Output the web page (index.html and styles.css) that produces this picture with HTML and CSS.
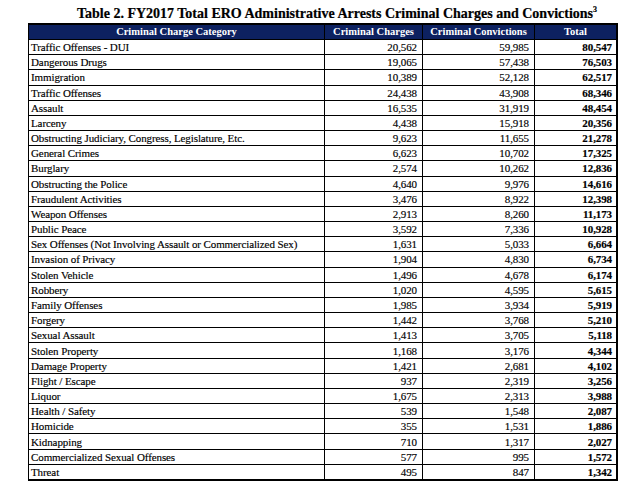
FILE: index.html
```html
<!DOCTYPE html>
<html>
<head>
<meta charset="utf-8">
<link rel="stylesheet" href="styles.css">
</head>
<body>
<div class="page">
  <h1 class="title">Table 2. FY2017 Total ERO Administrative Arrests Criminal Charges and Convictions<sup>3</sup></h1>
  <table class="data">
    <colgroup>
      <col class="c1"><col class="c2"><col class="c3"><col class="c4">
    </colgroup>
    <thead>
      <tr><th>Criminal Charge Category</th><th>Criminal Charges</th><th>Criminal Convictions</th><th>Total</th></tr>
    </thead>
    <tbody>
      <tr><td>Traffic Offenses - DUI</td><td>20,562</td><td>59,985</td><td>80,547</td></tr>
      <tr><td>Dangerous Drugs</td><td>19,065</td><td>57,438</td><td>76,503</td></tr>
      <tr><td>Immigration</td><td>10,389</td><td>52,128</td><td>62,517</td></tr>
      <tr><td>Traffic Offenses</td><td>24,438</td><td>43,908</td><td>68,346</td></tr>
      <tr><td>Assault</td><td>16,535</td><td>31,919</td><td>48,454</td></tr>
      <tr><td>Larceny</td><td>4,438</td><td>15,918</td><td>20,356</td></tr>
      <tr><td>Obstructing Judiciary, Congress, Legislature, Etc.</td><td>9,623</td><td>11,655</td><td>21,278</td></tr>
      <tr><td>General Crimes</td><td>6,623</td><td>10,702</td><td>17,325</td></tr>
      <tr><td>Burglary</td><td>2,574</td><td>10,262</td><td>12,836</td></tr>
      <tr><td>Obstructing the Police</td><td>4,640</td><td>9,976</td><td>14,616</td></tr>
      <tr><td>Fraudulent Activities</td><td>3,476</td><td>8,922</td><td>12,398</td></tr>
      <tr><td>Weapon Offenses</td><td>2,913</td><td>8,260</td><td>11,173</td></tr>
      <tr><td>Public Peace</td><td>3,592</td><td>7,336</td><td>10,928</td></tr>
      <tr><td>Sex Offenses (Not Involving Assault or Commercialized Sex)</td><td>1,631</td><td>5,033</td><td>6,664</td></tr>
      <tr><td>Invasion of Privacy</td><td>1,904</td><td>4,830</td><td>6,734</td></tr>
      <tr><td>Stolen Vehicle</td><td>1,496</td><td>4,678</td><td>6,174</td></tr>
      <tr><td>Robbery</td><td>1,020</td><td>4,595</td><td>5,615</td></tr>
      <tr><td>Family Offenses</td><td>1,985</td><td>3,934</td><td>5,919</td></tr>
      <tr><td>Forgery</td><td>1,442</td><td>3,768</td><td>5,210</td></tr>
      <tr><td>Sexual Assault</td><td>1,413</td><td>3,705</td><td>5,118</td></tr>
      <tr><td>Stolen Property</td><td>1,168</td><td>3,176</td><td>4,344</td></tr>
      <tr><td>Damage Property</td><td>1,421</td><td>2,681</td><td>4,102</td></tr>
      <tr><td>Flight / Escape</td><td>937</td><td>2,319</td><td>3,256</td></tr>
      <tr><td>Liquor</td><td>1,675</td><td>2,313</td><td>3,988</td></tr>
      <tr><td>Health / Safety</td><td>539</td><td>1,548</td><td>2,087</td></tr>
      <tr><td>Homicide</td><td>355</td><td>1,531</td><td>1,886</td></tr>
      <tr><td>Kidnapping</td><td>710</td><td>1,317</td><td>2,027</td></tr>
      <tr><td>Commercialized Sexual Offenses</td><td>577</td><td>995</td><td>1,572</td></tr>
      <tr><td>Threat</td><td>495</td><td>847</td><td>1,342</td></tr>
    </tbody>
  </table>
</div>
</body>
</html>
```
FILE: styles.css
```css
html, body {
  margin: 0;
  padding: 0;
  background: #fff;
}
.page {
  padding: 6px 0 0 28px;
  width: 590px;
  font-family: "Liberation Serif", "Times New Roman", serif;
  color: #000;
}
.title {
  margin: 0 0 1px 0;
  padding-left: 28px;
  font-size: 14px;
  line-height: 16px;
  font-weight: bold;
  text-align: center;
  white-space: nowrap;
  -webkit-text-stroke: 0.2px #000;
}
.title sup {
  font-size: 8px;
  line-height: 0;
  vertical-align: 6px;
}
.data {
  width: 590px;
  table-layout: fixed;
  border-collapse: separate;
  border-spacing: 0;
  border: 2px solid #000;
  border-left-width: 1px;
}
.c1 { width: 296px; }
.c2 { width: 98px; }
.c3 { width: 112px; }
.c4 { width: 81px; }
.data th {
  background: #0d2160;
  color: #fff;
  font-size: 10.5px;
  font-weight: bold;
  height: 14px;
  line-height: 14px;
  padding: 0;
  text-align: center;
  border-right: 1px solid #000;
  border-bottom: 1px solid #000;
}
.data td {
  font-size: 11px;
  letter-spacing: -0.1px;
  height: 14.18px;
  line-height: 14px;
  padding: 0 5px 0 2px;
  text-align: right;
  border-right: 1px solid #000;
  border-bottom: 1px solid #000;
  white-space: nowrap;
  overflow: hidden;
  -webkit-text-stroke: 0.15px #000;
}
.data td:first-child {
  text-align: left;
}
.data td:last-child {
  font-weight: bold;
  padding-right: 4px;
}
.data tr > :last-child {
  border-right: 0;
}
.data tbody tr:last-child td {
  border-bottom: 0;
}
```
